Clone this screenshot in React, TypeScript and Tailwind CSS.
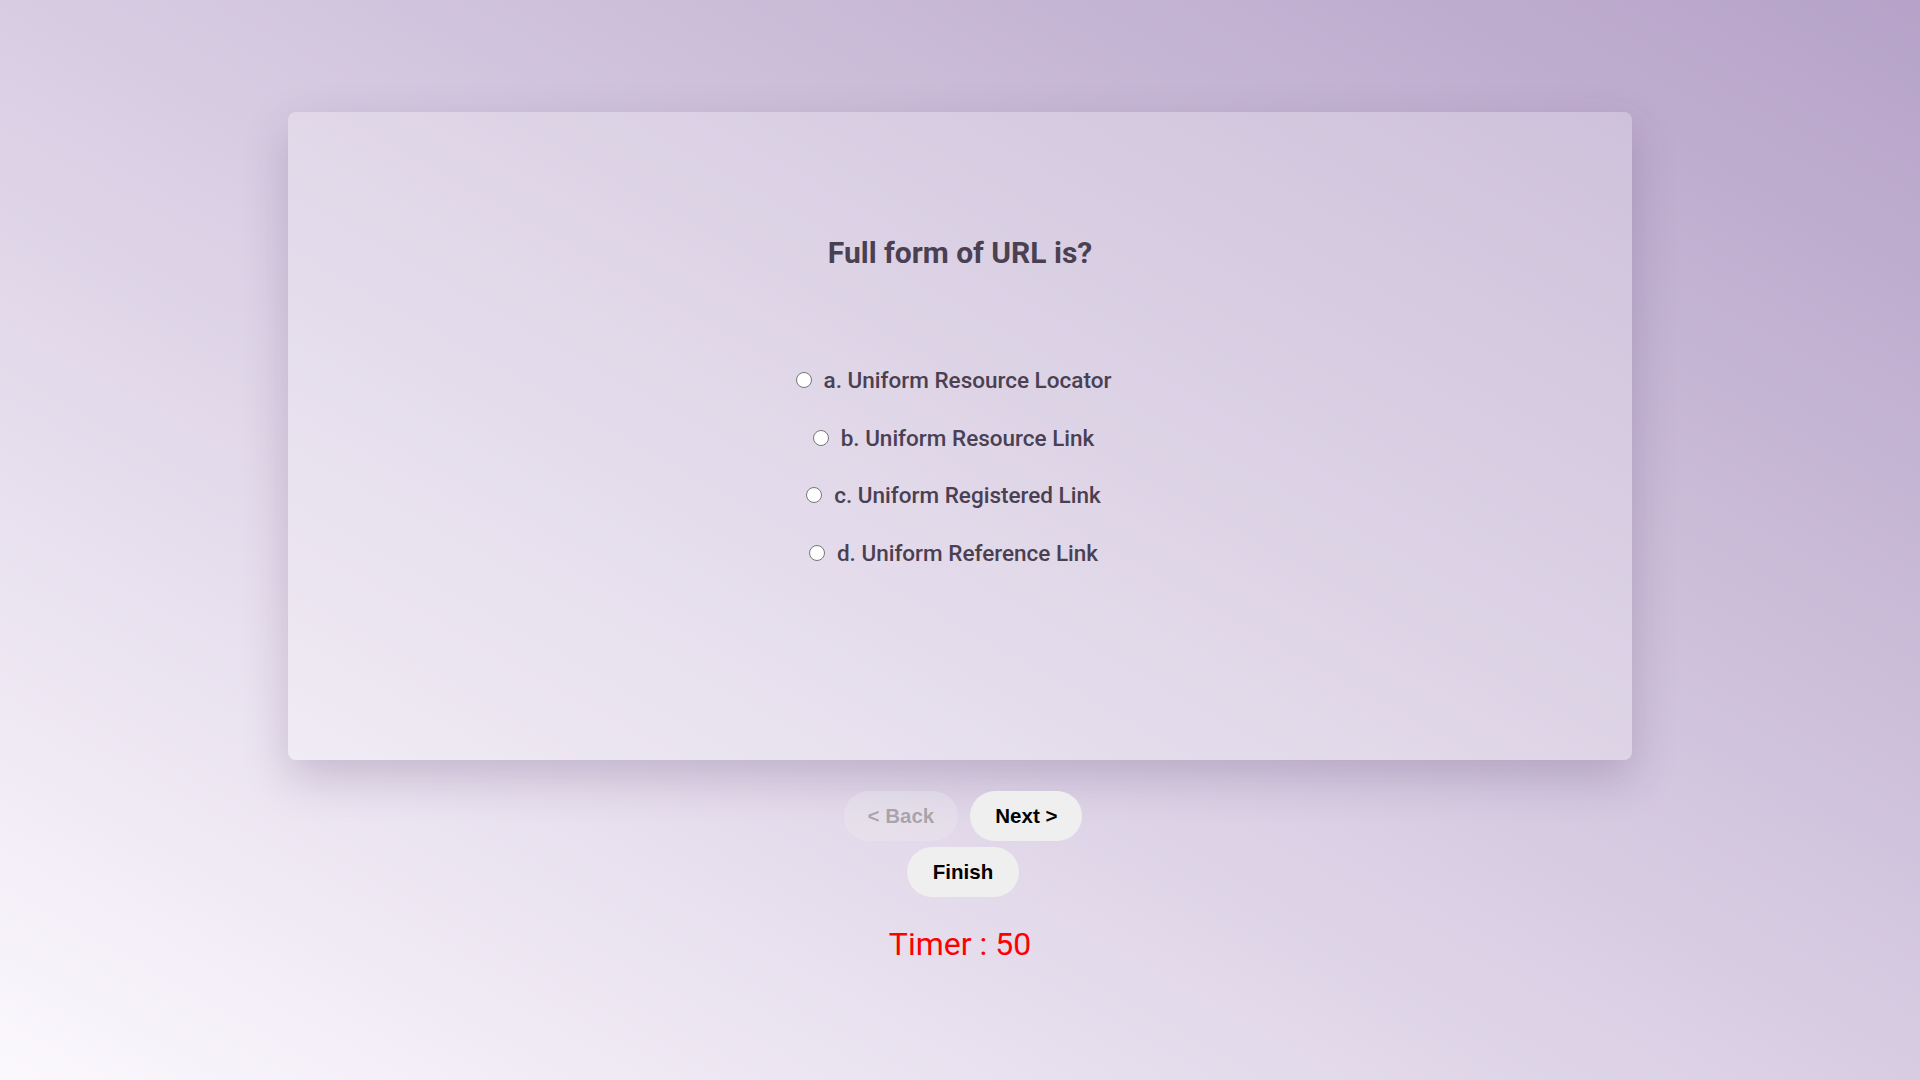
import { useState } from 'react';

const options = [
  'a. Uniform Resource Locator',
  'b. Uniform Resource Link',
  'c. Uniform Registered Link',
  'd. Uniform Reference Link',
];

export default function App() {
  const [selected, setSelected] = useState<number | null>(null);
  const [timer] = useState(50);

  return (
    <div className="flex min-h-screen w-full flex-col items-center bg-gradient-to-tr from-[#fbf8fd] to-[#b6a2c8] font-['Roboto',sans-serif]">
      {/* Question card */}
      <div className="mt-[112px] flex h-[648px] w-[1344px] flex-col items-center rounded-lg bg-white/25 shadow-[0_18px_45px_rgba(70,40,90,0.22)]">
        <h2 className="mt-[123px] text-[30px] font-bold leading-[normal] text-[#4a4052]">
          Full form of URL is?
        </h2>

        <div className="mt-[81px] flex flex-col items-center">
          {options.map((opt, i) => (
            <label
              key={opt}
              className="flex h-[57.7px] cursor-pointer items-center pr-[13px] text-[22.5px] font-medium leading-[normal] text-[#4a4052]"
              onClick={() => setSelected(i)}
            >
              <span className="mr-[12px] flex h-[16px] w-[16px] items-center justify-center rounded-full border border-[#767676] bg-white">
                {selected === i && <span className="h-[8px] w-[8px] rounded-full bg-[#0075ff]" />}
              </span>
              {opt}
            </label>
          ))}
        </div>
      </div>

      {/* Navigation */}
      <div className="mt-[31px] ml-[6px] flex gap-[12px] font-['Liberation_Sans',Arial,sans-serif]">
        <button
          disabled
          className="h-[50px] rounded-full bg-[rgba(239,239,239,0.3)] px-[24px] text-[20.5px] font-bold text-[rgba(16,16,16,0.3)]"
        >
          &lt; Back
        </button>
        <button className="h-[50px] rounded-full bg-[#efefef] px-[25px] text-[20.5px] font-bold text-black">
          Next &gt;
        </button>
      </div>
      <button className="mt-[6px] ml-[6px] h-[50px] rounded-full bg-[#efefef] px-[26px] font-['Liberation_Sans',Arial,sans-serif] text-[20.5px] font-bold text-black">
        Finish
      </button>

      <div className="mt-[28px] text-[32px] leading-[normal] text-[#ff0000]">Timer : {timer}</div>
    </div>
  );
}
